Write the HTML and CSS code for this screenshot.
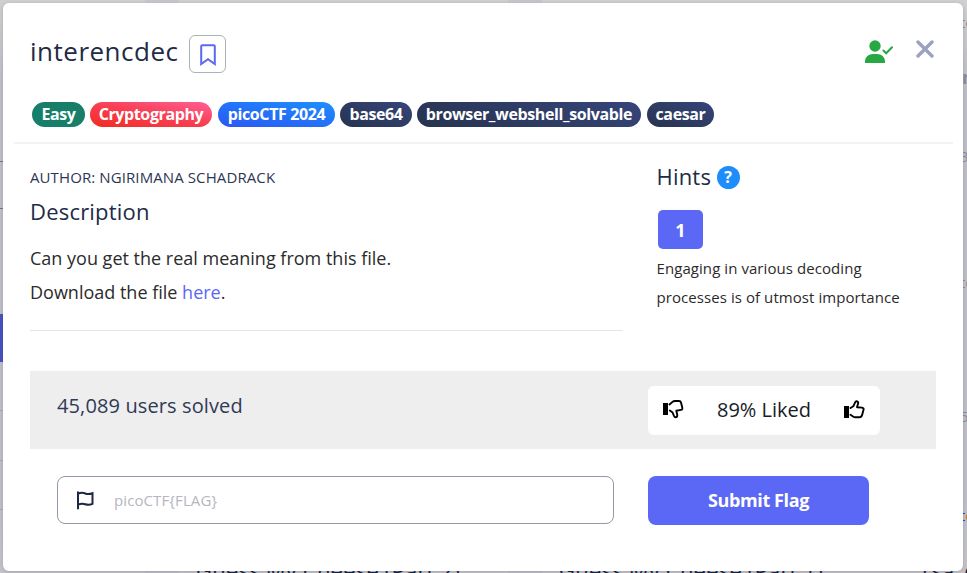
FILE: index.html
```html
<!DOCTYPE html>
<html lang="en">
<head>
<meta charset="utf-8">
<title>interencdec</title>
<link rel="stylesheet" href="styles.css">
</head>
<body>
<div class="backdrop" aria-hidden="true">
  <i class="gutter g1"></i><i class="gutter g2"></i>
  <i class="rule r1"></i><i class="rule r2"></i><i class="rule r3"></i><i class="rule r4"></i><i class="rule r5"></i>
  <i class="side-active"></i>
  <span class="card-title c1">Guess My Cheese (Part 2)</span>
  <span class="card-title c2">Guess My Cheese (Part 1)</span>
  <span class="card-title c3">rsa_oracle</span>
  <span class="edge e1">te</span><span class="edge e2 bold">m</span><span class="edge e3">3</span><span class="edge e4">te</span><span class="edge e5">5</span><span class="edge e6">t<b>e</b></span>
</div>
<main class="modal">
  <header class="head">
    <div class="title-row">
      <h1>interencdec</h1>
      <button class="bookmark" aria-label="Bookmark"><svg width="16" height="22" viewBox="0 0 16 22"><path d="M1.2 20V2.2Q1.2 1.2 2.2 1.2H13.8Q14.8 1.2 14.8 2.2V20L8 15.2Z"/></svg></button>
      <svg class="solved" width="29" height="24" viewBox="0 0 29 24"><circle cx="10" cy="6" r="5.7"/><path d="M0 23V21.500C0 17 3.500 14 8 14H12C16.500 14 20 17 20 21.500V23Z"/><path class="check" d="M18.400 10.500L21.200 13.300L27 7.300"/></svg>
      <button class="close" aria-label="Close"><svg width="18" height="18" viewBox="0 0 18 18"><path d="M2 2L16 16M16 2L2 16"/></svg></button>
    </div>
    <div class="tags">
      <span class="tag easy">Easy</span><span class="tag crypto">Cryptography</span><span class="tag event">picoCTF 2024</span><span class="tag base">base64</span><span class="tag shell">browser_webshell_solvable</span><span class="tag caesar">caesar</span>
    </div>
  </header>
  <div class="content">
    <section class="description">
      <p class="author">AUTHOR: NGIRIMANA SCHADRACK</p>
      <h2>Description</h2>
      <p class="body">Can you get the real meaning from this file.<br>Download the file <a>here</a>.</p>
    </section>
    <aside class="hints">
      <h2>Hints <b class="help">?</b></h2>
      <button class="hint-btn">1</button>
      <p>Engaging in various decoding<br>processes is of utmost importance</p>
    </aside>
  </div>
  <div class="stats">
    <span class="users">45,089 users solved</span>
    <div class="rating">
      <svg width="21" height="19" viewBox="0 0 21 19"><path class="cuff" d="M0 3H5V15H0Z"/><path class="hand" d="M6.500 4.500L9.500 1.900Q10.500 1 12 1H16Q17.600 1 18 2.600L19.300 7.800Q19.700 9.600 18 9.900L13.300 10.800L14.300 15Q14.300 17.300 12.600 17.300Q11.500 17.300 11 16L9.600 12.600L6.800 10.600"/></svg>
      <span>89% Liked</span>
      <svg width="21" height="19" viewBox="0 0 21 19"><path class="cuff" d="M0 6H5V18H0Z"/><path class="hand" d="M6.500 8L9.300 6.300L11 2.700Q11.700 1 13 1.300Q14.600 1.800 14.100 3.500L13 7.200L18 7.600Q20 8 19.500 9.800L18.200 14.800Q17.500 17.300 15.500 17.300H11.500Q10.200 17.300 9 16.500L6.500 14.800"/></svg>
    </div>
  </div>
  <div class="submit-row">
    <div class="field">
      <svg width="18" height="19" viewBox="0 0 18 19"><path d="M2 0.500V18.200M2 2.800C5 1.300 7 1.600 9.300 2.500C11.700 3.500 14 3.200 16.500 2.200V12.900C14 14 11.700 14 9.300 13.200C7 12.400 5 12.300 2 13.700"/></svg>
      <span>picoCTF{FLAG}</span>
    </div>
    <button class="submit">Submit Flag</button>
  </div>
</main>
</body>
</html>
```
FILE: styles.css
```css
* { box-sizing: border-box; }
html, body { margin: 0; height: 100%; overflow: hidden; }
body { font-family: "Open Sans", sans-serif; color: #212b45; background: #bfbfc8; padding: 3px 4px 2px 3px; }
h1, h2, p { margin: 0; font-weight: 400; }
button { font: inherit; border: 0; padding: 0; display: flex; align-items: center; justify-content: center; }
svg { display: block; flex: none; fill: none; }

.backdrop { position: absolute; inset: 0; overflow: hidden; background: linear-gradient(#d0d0d2, #bfbfc7 80px, #bfbfc7 500px, #c4c4ca); }
.backdrop > * { position: absolute; white-space: nowrap; }
.gutter { width: 34px; top: 0; bottom: 0; background: rgba(170,170,190,.25); }
.g1 { left: 145px; } .g2 { left: 508px; }
.rule { left: 0; width: 3px; height: 1px; background: #a8a8b3; }
.r1 { top: 161px; background: #777784; } .r2 { top: 208px; background: #777784; } .r3 { top: 410px; } .r4 { top: 460px; } .r5 { top: 509px; }
.side-active { left: 0; top: 314px; width: 3px; height: 48px; background: #4953c0; }
.card-title { top: 555px; font-size: 22px; line-height: 30px; letter-spacing: .2px; color: #1b2340; }
.c1 { left: 196px; } .c2 { left: 559px; } .c3 { left: 922px; }
.edge { left: 960px; font-size: 15px; line-height: 20px; color: #8d8d9a; }
.e1 { top: 12px; } .e2 { top: 67px; left: 962px; font-size: 18px; } .bold { font-weight: 700; } .e3 { top: 146px; } .e4 { top: 272px; } .e5 { top: 406px; } .e6 { top: 505px; color: #384b80; } .e6 b { font-weight: 400; color: #b8703a; }

.modal { position: relative; width: 960px; height: 568px; background: #fff; border-radius: 6px; box-shadow: 0 1px 4px rgba(0,0,0,.16); }
.head { height: 141px; margin: 0 10px 0 11px; padding: 32px 18px 0 16px; border-bottom: 2px solid #f3f3f3; }
.title-row { display: flex; height: 38px; }
h1 { width: 159px; flex: none; font-size: 26px; line-height: 32px; white-space: nowrap; letter-spacing: .5px; }
.bookmark { flex: none; width: 37px; height: 38px; padding-top: 1px; border: 1px solid #a9b1bd; border-radius: 6px; background: #fff; }
.bookmark path { stroke: #5a68f5; stroke-width: 2; }
.solved { margin: 5px 0 0 639px; }
.solved path, .solved circle { fill: #28a745; }
.solved .check { fill: none; stroke: #28a745; stroke-width: 2; stroke-linecap: round; }
.close { width: 18px; height: 18px; margin: 5px 0 0 22px; background: none; }
.close path { stroke: #9ba1bf; stroke-width: 3.4; stroke-linecap: round; }
.tags { display: flex; margin: 29px 0 0 2px; }
.tag { height: 25px; border-radius: 13px; color: #fff; font-size: 16px; font-weight: 700; line-height: 25px; text-align: center; white-space: nowrap; letter-spacing: -.38px; background: linear-gradient(20deg, #27334f, #36457a); }
.easy { width: 53px; margin-right: 5px; background: #167e69; }
.crypto { width: 122px; margin-right: 6px; background: linear-gradient(10deg, #f02c20, #f83e52 50%, #ff6096); }
.event { width: 117px; margin-right: 5px; background: linear-gradient(10deg, #2c57f2, #2372fa 50%, #1e90fc); }
.base { width: 72px; margin-right: 5px; }
.shell { width: 224px; margin-right: 6px; }
.caesar { width: 67px; }

.content { display: flex; margin: 0 27px; height: 227px; }
.description { width: 593px; height: 187px; border-bottom: 1px solid #e5e5e5; }
.author { padding-top: 23px; font-size: 15px; line-height: 20px; color: #2c3654; letter-spacing: .1px; white-space: nowrap; }
h2 { font-size: 22px; line-height: 30px; letter-spacing: .2px; }
.description h2 { margin-top: 9px; }
.body { margin-top: 15px; font-size: 18px; line-height: 34px; color: #2b2b2b; }
.body a { color: #5a68f5; }
.hints { padding: 17px 0 0 33.5px; }
.hints h2 { display: flex; height: 32px; line-height: 30px; }
.help { width: 23px; height: 23px; border-radius: 50%; margin: 5px 0 0 5.5px; background: #1e8dfc; color: #fff; font-size: 16px; line-height: 22px; text-align: center; letter-spacing: 0; }
.hint-btn { width: 45px; height: 39px; margin: 17px 0 0 1.5px; border-radius: 5px; background: #5a68f5; color: #fff; font-size: 18px; font-weight: 700; }
.hints p { margin-top: 5px; font-size: 15px; line-height: 29px; letter-spacing: .07px; color: #2b2b2b; white-space: nowrap; }

.stats { display: flex; margin: 0 27px; height: 78px; background: #eee; padding: 15px 56px 0 27px; }
.users { width: 591px; font-size: 20px; line-height: 40px; letter-spacing: .12px; color: #303a55; }
.rating { width: 232px; height: 49px; padding: 0 15px 2px; display: flex; align-items: center; justify-content: space-between; border-radius: 6px; background: #fff; color: #171c29; font-size: 20px; white-space: nowrap; }
.cuff { fill: #000; }
.hand { stroke: #000; stroke-width: 1.9; stroke-linejoin: round; stroke-linecap: round; }

.submit-row { display: flex; padding: 27px 0 0 54px; }
.field { width: 557px; height: 48px; margin-right: 34px; display: flex; align-items: center; padding-left: 18px; border: 1px solid #9697a7; border-radius: 8px; font-size: 15px; letter-spacing: .1px; color: #b5b6be; }
.field svg { margin-right: 20px; }
.field path { stroke: #1d2745; stroke-width: 2; }
.submit { width: 221px; height: 49px; padding-bottom: 1px; border-radius: 8px; background: #5a68f5; color: #fff; font-size: 18px; font-weight: 700; letter-spacing: -.4px; }
```
